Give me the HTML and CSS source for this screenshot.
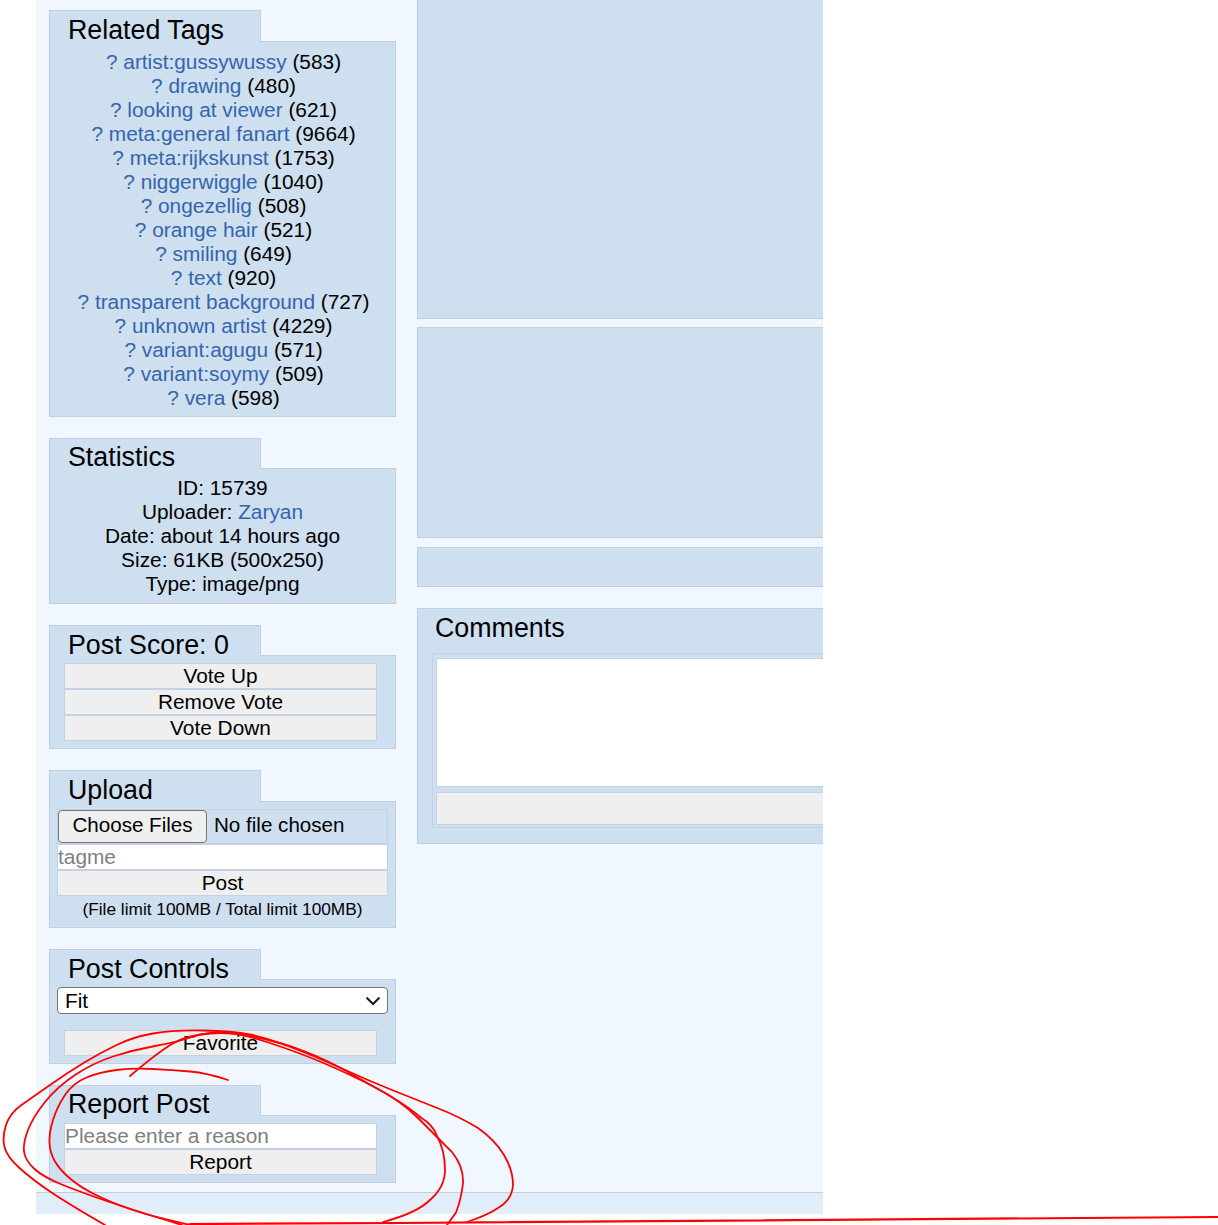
FILE: index.html
```html
<!DOCTYPE html>
<html lang="en">
<head>
    <meta charset="UTF-8">
    <meta name="viewport" content="width=device-width, initial-scale=1.0">
    <title>Post 15739</title>
    <link rel="stylesheet" href="styles.css">
</head>
<body>
    <div class="page">
        <div class="columns">
            <div class="sidebar">
                <section class="box">
                    <h3 class="tab tab-tall">Related Tags</h3>
                    <div class="panel panel-tags">
                        <div><a href="#">? artist:gussywussy</a> (583)</div>
                        <div><a href="#">? drawing</a> (480)</div>
                        <div><a href="#">? looking at viewer</a> (621)</div>
                        <div><a href="#">? meta:general fanart</a> (9664)</div>
                        <div><a href="#">? meta:rijkskunst</a> (1753)</div>
                        <div><a href="#">? niggerwiggle</a> (1040)</div>
                        <div><a href="#">? ongezellig</a> (508)</div>
                        <div><a href="#">? orange hair</a> (521)</div>
                        <div><a href="#">? smiling</a> (649)</div>
                        <div><a href="#">? text</a> (920)</div>
                        <div><a href="#">? transparent background</a> (727)</div>
                        <div><a href="#">? unknown artist</a> (4229)</div>
                        <div><a href="#">? variant:agugu</a> (571)</div>
                        <div><a href="#">? variant:soymy</a> (509)</div>
                        <div><a href="#">? vera</a> (598)</div>
                    </div>
                </section>

                <section class="box">
                    <h3 class="tab tab-high">Statistics</h3>
                    <div class="panel panel-stats">
                        <div>ID: 15739</div>
                        <div>Uploader: <a href="#">Zaryan</a></div>
                        <div>Date: about 14 hours ago</div>
                        <div>Size: 61KB (500x250)</div>
                        <div>Type: image/png</div>
                    </div>
                </section>

                <section class="box">
                    <h3 class="tab">Post Score: 0</h3>
                    <div class="panel panel-narrow">
                        <button class="btn">Vote Up</button>
                        <button class="btn">Remove Vote</button>
                        <button class="btn">Vote Down</button>
                    </div>
                </section>

                <section class="box">
                    <h3 class="tab tab-tall">Upload</h3>
                    <div class="panel panel-wide">
                        <input class="file" type="file" multiple>
                        <input class="field" type="text" placeholder="tagme">
                        <button class="btn">Post</button>
                        <div class="limit">(File limit 100MB / Total limit 100MB)</div>
                    </div>
                </section>

                <section class="box">
                    <h3 class="tab">Post Controls</h3>
                    <div class="panel panel-controls">
                        <select class="fit">
                            <option>Fit</option>
                            <option>Full</option>
                        </select>
                        <button class="btn btn-favorite">Favorite</button>
                    </div>
                </section>

                <section class="box">
                    <h3 class="tab tab-high">Report Post</h3>
                    <div class="panel panel-narrow">
                        <input class="field" type="text" placeholder="Please enter a reason">
                        <button class="btn">Report</button>
                    </div>
                </section>
            </div>

            <div class="main">
                <div class="block block-image"></div>
                <div class="block block-info"></div>
                <div class="block block-bar"></div>
                <div class="block block-comments">
                    <h3 class="comments-title">Comments</h3>
                    <div class="comment-form">
                        <textarea class="comment-text"></textarea>
                        <button class="btn btn-comment"></button>
                    </div>
                </div>
            </div>
        </div>
        <div class="footer"></div>
    </div>

    <!-- hand drawn red circle over the report box -->
    <svg class="scribble" width="1218" height="1225" viewBox="0 0 1218 1225" fill="none" stroke="#f00" stroke-width="1.8" stroke-linecap="round">
        <path d="M105 1225Q67 1203 50 1191.5Q33 1180 20 1168.5Q7 1157 4.500 1147Q2 1137 6 1125Q10 1113 21.500 1105Q33 1097 50 1085Q67 1073 83.500 1063Q100 1053 116.500 1045Q133 1037 153 1033.500Q173 1030 203 1030.500Q233 1031 250 1034.500Q267 1038 292 1047.500Q317 1057 342 1068.500Q367 1080 392 1090Q417 1100 438.500 1108.500Q460 1117 478 1128Q495 1140 504 1155Q513 1170 513 1185Q512 1200 498 1208Q488 1215 467 1222"/>
        <path d="M182 1225Q133 1210 108 1201.500Q83 1193 63 1185Q43 1177 34 1168.500Q25 1160 24 1151.500Q23 1143 28 1130Q33 1117 45 1102Q57 1087 75 1075Q93 1063 113 1056.500Q133 1050 155 1046Q177 1042 192 1037Q207 1032 223.500 1032.500Q240 1033 270 1043Q300 1053 323.500 1063Q347 1073 373.500 1086.500Q400 1100 418.500 1118.500Q437 1137 452 1152Q464 1167 463 1183.500Q461 1200 456 1212.500L447 1225"/>
        <path d="M228 1080Q207 1073 190 1071.500Q173 1070 153 1069Q133 1068 116.500 1070Q100 1072 86.500 1077.500Q73 1083 65 1095Q57 1107 53 1120Q49 1133 49.500 1143Q50 1153 55 1161.500Q60 1170 70 1178.500Q80 1187 95 1194.500Q110 1202 128.500 1208.500Q147 1215 168.500 1220L190 1225"/>
        <path d="M383 1222Q417 1213 430 1200Q445 1187 445 1170Q445 1150 436.500 1135Q433 1125 421.500 1118Q410 1108 388.500 1095Q367 1083 347 1071.500Q327 1060 305 1051.500Q283 1043 258 1037.500Q233 1032 210 1033.500Q187 1035 172 1044Q157 1053 130 1076"/>
        <path d="M190 1224L400 1223L1218 1217" stroke-width="2.2"/>
    </svg>
</body>
</html>
```

FILE: styles.css
```css
html {
    background: #fff;
}
body {
    margin: 0;
    position: relative;
    height: 1225px;
    overflow: hidden;
    font-family: "Liberation Sans", Arial, sans-serif;
    font-size: 20.85px;
    line-height: 24px;
    color: #000;
}
a {
    color: #3465ad;
    text-decoration: none;
}
.page {
    width: 787px;
    margin-left: 36px;
    background: #f0f7ff;
    overflow: hidden;
}
.columns {
    display: flex;
    gap: 21px;
    padding: 0 0 9px 13px;
}
.sidebar {
    flex: 0 0 347px;
    display: flex;
    flex-direction: column;
    gap: 21px;
    padding-top: 10px;
}
.tab {
    position: relative;
    z-index: 1;
    box-sizing: border-box;
    width: 212px;
    height: 31px;
    margin: 0 0 -1px;
    padding: 4px 0 0 18px;
    border: 1px solid #c0d0e2;
    border-bottom: none;
    background: #cedfef;
    font-size: 26.8px;
    font-weight: normal;
    line-height: 30px;
}
.tab-tall {
    height: 32px;
}
.tab-high {
    padding-top: 3px;
}
.panel {
    border: 1px solid #c0d0e2;
    background: #cedfef;
    text-align: center;
}
.panel-tags {
    padding: 8px 0 6px 2px;
}
.panel-stats {
    padding: 7px 0;
}
.panel-narrow {
    padding: 7px 18px 7px 14px;
}
.panel-wide {
    padding: 7px 7px 6px;
}
.panel-controls {
    padding: 7px;
    text-align: left;
}
.btn {
    display: block;
    box-sizing: border-box;
    width: 100%;
    height: 26px;
    padding: 0;
    border: 1px solid #c3d1e2;
    border-radius: 0;
    background: #efefef;
    font: inherit;
    color: #000;
}
.field {
    display: block;
    box-sizing: border-box;
    width: 100%;
    height: 26px;
    padding: 0;
    border: 1px solid #c3d1e2;
    border-radius: 0;
    background: #fff;
    font: inherit;
}
.field::placeholder {
    color: #808080;
}
.file {
    display: block;
    box-sizing: border-box;
    width: 100%;
    height: 35px;
    padding: 0;
    border: 1px solid #c3d1e2;
    font: inherit;
    font-size: 20.6px;
}
.file::file-selector-button {
    box-sizing: border-box;
    width: 149px;
    height: 33px;
    margin-right: 7px;
    padding: 0 0 3px;
    border: 1px solid #767676;
    border-radius: 4px;
    background: #efefef;
    font: inherit;
    color: #000;
}
.limit {
    margin-top: 1px;
    font-size: 17.3px;
    line-height: 24px;
}
.fit {
    display: block;
    box-sizing: border-box;
    width: 331px;
    height: 27px;
    padding: 0 0 0 7px;
    border: 1px solid #767676;
    border-radius: 4px;
    appearance: none;
    background: #fff url("data:image/svg+xml,%3Csvg xmlns='http://www.w3.org/2000/svg' width='16' height='10' fill='none' stroke='%231a1a1a' stroke-width='2'%3E%3Cpath d='M1.500 1.500l6.500 6.500l6.500-6.500'/%3E%3C/svg%3E") no-repeat right 6px center;
    font: inherit;
    color: #000;
}
.btn-favorite {
    width: 313px;
    margin: 16px 0 0 7px;
}
.main {
    flex: 0 0 500px;
    min-width: 0;
}
.block {
    box-sizing: border-box;
    border: 1px solid #c0d0e2;
    background: #cedfef;
}
.block-image {
    height: 319px;
    border-top: none;
}
.block-info {
    height: 211px;
    margin-top: 8px;
}
.block-bar {
    height: 40px;
    margin-top: 9px;
}
.block-comments {
    margin-top: 21px;
    padding: 0 14px 15px;
}
.comments-title {
    margin: 0;
    padding: 4px 0 0 3px;
    height: 44px;
    box-sizing: border-box;
    font-size: 26.8px;
    font-weight: normal;
    line-height: 30px;
}
.comment-form {
    padding: 4px 3px 2px;
    border: 1px solid #c3d1e2;
}
.comment-text {
    display: block;
    box-sizing: border-box;
    width: 100%;
    height: 129px;
    padding: 0;
    border: 1px solid #c3d1e2;
    background: #fff;
    resize: none;
}
.btn-comment {
    height: 33px;
    margin-top: 5px;
}
.footer {
    height: 22px;
    border-top: 1px solid #bccfe2;
    box-sizing: border-box;
    background: #e1eefa;
}
.scribble {
    position: absolute;
    z-index: 2;
    left: 0;
    top: 0;
    pointer-events: none;
}
```
